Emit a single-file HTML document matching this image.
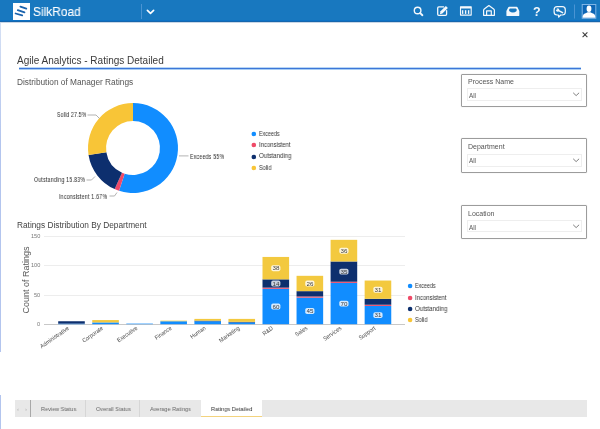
<!DOCTYPE html>
<html><head><meta charset="utf-8"><style>
html,body{margin:0;padding:0;width:600px;height:429px;overflow:hidden;background:#fff;}
body{position:relative;font-family:"Liberation Sans",sans-serif;}
.t{position:absolute;white-space:nowrap;line-height:1;font-family:"Liberation Sans",sans-serif;will-change:transform;}
</style></head><body>
<div style="position:absolute;left:0;top:0;width:600px;height:22px;background:#1878BF;"></div><div style="position:absolute;left:0;top:20px;width:600px;height:1px;background:#0d72c6;"></div><div style="position:absolute;left:0;top:21px;width:600px;height:1px;background:#1566ad;"></div><div style="position:absolute;left:0;top:22px;width:600px;height:1px;background:#c9d6e6;"></div><div style="position:absolute;left:12.6px;top:2.8px;width:17.1px;height:17px;background:#fff;"></div><svg style="position:absolute;left:0;top:0" width="40" height="22" viewBox="0 0 40 22">
<g stroke="#1a63ad" stroke-width="1.8" stroke-linecap="round">
<line x1="20.4" y1="6.6" x2="26.3" y2="8.6"/>
<line x1="17.8" y1="10.2" x2="24.5" y2="12.3"/>
<line x1="15.6" y1="13.5" x2="22.2" y2="15.4"/>
</g></svg><div class="t" style="left:33.40px;top:6.23px;font-size:12.6px;color:#fff;-webkit-text-stroke:0.1px #fff;transform:scaleX(0.945);transform-origin:0 0;">SilkRoad</div>
<div style="position:absolute;left:140.5px;top:4px;width:1px;height:14.7px;background:#4a94d3;"></div><svg style="position:absolute;left:145px;top:8px" width="11" height="8" viewBox="0 0 11 8">
<polyline points="2.4,2.4 5.5,5.3 8.6,2.4" fill="none" stroke="#fff" stroke-width="1.7" stroke-linecap="round" stroke-linejoin="round"/></svg><svg style="position:absolute;left:400px;top:0" width="200" height="22" viewBox="400 0 200 22">
<g fill="none" stroke="#f4f8fc" stroke-width="1.4" stroke-linecap="round" stroke-linejoin="round">
<circle cx="417.6" cy="10.5" r="3.3"/>
<line x1="420.2" y1="13.1" x2="422.4" y2="15.2" stroke-width="1.9"/>
<path d="M443.6 6.9 H438.8 Q437.7 6.9 437.7 8 V14.3 Q437.7 15.4 438.8 15.4 H445.5 Q446.6 15.4 446.6 14.3 V10.6" stroke-width="1.3"/>
<rect x="460.5" y="6.8" width="10.7" height="8.3" stroke-width="1.1"/>
<path d="M483.6 15.3 V10.2 Q483.8 9.5 484.6 8.8 L488.9 5.6 L493.3 8.8 Q494.2 9.5 494.4 10.2 V15.3 Z" stroke-width="1.2"/>
<path d="M486.6 15.3 V10.9 H491.3 V15.3" stroke-width="1.2"/>
<path d="M557.1 6.7 H562.3 Q565.3 6.7 565.3 9.7 V12 Q565.3 15 562.3 15 H560.6 L558.7 17.2 L558.4 15 H557.1 Q554.1 15 554.1 12 V9.7 Q554.1 6.7 557.1 6.7 Z" stroke-width="1.2"/>
</g>
<g fill="#f4f8fc">
<path d="M445.9 5.9 L447.9 7.9 L442.4 13.4 L439.9 14.2 L440.5 11.3 Z"/>
<rect x="460.5" y="6.8" width="10.7" height="1.7"/>
<rect x="461.9" y="10.2" width="1.4" height="3.7"/>
<rect x="464.9" y="10.2" width="1.4" height="3.7"/>
<rect x="467.9" y="10.2" width="1.4" height="3.7"/>
<path d="M509.2 6.7 H516.6 Q517.2 6.7 517.5 7.3 L519.3 11 V15.5 Q519.3 15.9 518.9 15.9 H506.8 Q506.4 15.9 506.4 15.5 V11 L508.3 7.3 Q508.6 6.7 509.2 6.7 Z"/>
</g>
<path d="M510.2 8.5 H515.6 Q516.3 8.5 516.5 9.2 L516.7 11.1 Q514.8 12.6 512.9 12.6 Q511 12.6 509.1 11.1 L509.3 9.2 Q509.5 8.5 510.2 8.5 Z" fill="#1878BF"/>
<path d="M557.8 10.2 L562.6 12.6" stroke="#f4f8fc" stroke-width="1.5" stroke-linecap="round"/>
<circle cx="557.6" cy="10" r="1.7" fill="#f4f8fc"/>
<circle cx="556.6" cy="8.9" r="0.75" fill="#1878BF"/>
<rect x="574" y="4.5" width="1" height="14" fill="#4a94d3"/>
<rect x="582.2" y="4.5" width="13.6" height="13.8" fill="#0e66b5" stroke="#7fb5e6" stroke-width="1"/>
<ellipse cx="589" cy="8.7" rx="2.4" ry="3.2" fill="#fff"/>
<path d="M582.7 17.8 V16 Q583.2 13.6 586.2 13 L587.6 12.2 H590.4 L591.8 13 Q594.8 13.6 595.3 16 V17.8 Z" fill="#fff"/>
</svg><div class="t" style="left:532.70px;top:5.82px;font-size:12.5px;color:#f4f8fc;font-weight:bold;">?</div>
<div style="position:absolute;left:0;top:23px;width:1px;height:329px;background:linear-gradient(#d5e0f4,#b3c5ee 120px);"></div><div style="position:absolute;left:0;top:395px;width:1px;height:34px;background:#b3c5ee;"></div><svg style="position:absolute;left:580px;top:30px" width="10" height="10" viewBox="0 0 10 10">
<g stroke="#3a3a3a" stroke-width="1.05"><line x1="2.6" y1="2.3" x2="7.4" y2="7.1"/><line x1="7.4" y1="2.3" x2="2.6" y2="7.1"/></g></svg><div class="t" style="left:17.20px;top:55.73px;font-size:10px;color:#3a3a3a;">Agile Analytics - Ratings Detailed</div>
<div style="position:absolute;left:18.6px;top:67px;width:562.7px;height:1px;background:#b9d7f5;"></div><div style="position:absolute;left:18.6px;top:68px;width:562.7px;height:1px;background:#3c76d8;"></div><div style="position:absolute;left:18.6px;top:69px;width:562.7px;height:1px;background:#a9cdf3;"></div><div class="t" style="left:17.40px;top:78.17px;font-size:8.3px;color:#555;">Distribution of Manager Ratings</div>
<svg style="position:absolute;left:0;top:0" width="600" height="429" viewBox="0 0 600 429"><path d="M133.00 103.00 A45 45 0 1 1 119.09 190.80 L124.66 173.68 A27 27 0 1 0 133.00 121.00 Z" fill="#118DFF"/><path d="M119.09 190.80 A45 45 0 0 1 114.69 189.11 L122.01 172.66 A27 27 0 0 0 124.66 173.68 Z" fill="#EF4A68"/><path d="M114.69 189.11 A45 45 0 0 1 88.55 155.04 L106.33 152.22 A27 27 0 0 0 122.01 172.66 Z" fill="#0D2F6E"/><path d="M88.55 155.04 A45 45 0 0 1 133.00 103.00 L133.00 121.00 A27 27 0 0 0 106.33 152.22 Z" fill="#F8C537"/><g fill="none" stroke="#999" stroke-width="0.75">
<polyline points="87.5,115 96,115 99.5,118.5"/>
<polyline points="179,155.9 188.5,155.9"/>
<polyline points="86.5,180 91.5,180 95,176.5"/>
<polyline points="109.5,196 114.5,196 117,192.5"/>
</g></svg><div class="t" style="left:57.00px;top:112.38px;font-size:6.4px;color:#333;letter-spacing:0.3px;-webkit-text-stroke:0.04px #333;transform:scaleX(0.7875739518592086);transform-origin:0 0;">Solid 27.5%</div>
<div class="t" style="left:190.40px;top:154.38px;font-size:6.4px;color:#333;letter-spacing:0.3px;-webkit-text-stroke:0.04px #333;transform:scaleX(0.8106324818550287);transform-origin:0 0;">Exceeds 55%</div>
<div class="t" style="left:33.70px;top:177.38px;font-size:6.4px;color:#333;letter-spacing:0.3px;-webkit-text-stroke:0.04px #333;transform:scaleX(0.8091891073366478);transform-origin:0 0;">Outstanding 15.83%</div>
<div class="t" style="left:59.20px;top:193.58px;font-size:6.4px;color:#333;letter-spacing:0.3px;-webkit-text-stroke:0.04px #333;transform:scaleX(0.8120376597175522);transform-origin:0 0;">Inconsistent 1.67%</div>
<svg style="position:absolute;left:249px;top:128.80px" width="10" height="10"><circle cx="4.8" cy="5" r="2.3" fill="#118DFF"/></svg><div class="t" style="left:259.20px;top:130.57px;font-size:6.3px;color:#333;transform:scaleX(0.85);transform-origin:0 0;">Exceeds</div>
<svg style="position:absolute;left:249px;top:140.15px" width="10" height="10"><circle cx="4.8" cy="5" r="2.3" fill="#EF4A68"/></svg><div class="t" style="left:259.20px;top:141.92px;font-size:6.3px;color:#333;transform:scaleX(0.94);transform-origin:0 0;">Inconsistent</div>
<svg style="position:absolute;left:249px;top:151.50px" width="10" height="10"><circle cx="4.8" cy="5" r="2.3" fill="#0D2F6E"/></svg><div class="t" style="left:259.20px;top:153.27px;font-size:6.3px;color:#333;transform:scaleX(0.95);transform-origin:0 0;">Outstanding</div>
<svg style="position:absolute;left:249px;top:162.85px" width="10" height="10"><circle cx="4.8" cy="5" r="2.3" fill="#F8C537"/></svg><div class="t" style="left:259.20px;top:164.62px;font-size:6.3px;color:#333;transform:scaleX(0.886);transform-origin:0 0;">Solid</div>
<div style="position:absolute;left:461.2px;top:73.50px;width:123.60px;height:31.50px;border:1px solid #9c9c9c;border-radius:1px;box-shadow:0 0 1px #c8c8c8;"></div><div style="position:absolute;left:466.7px;top:88.10px;width:113.60px;height:11.10px;border:0.5px solid #eeeeee;"></div><div class="t" style="left:468.00px;top:78.47px;font-size:7.0px;color:#555;">Process Name</div>
<div class="t" style="left:469.00px;top:93.07px;font-size:6.3px;color:#555;">All</div>
<svg style="position:absolute;left:570px;top:89.25px" width="12" height="10" viewBox="0 0 12 10">
<polyline points="3.2,3.8 6.15,6.6 9.1,3.8" fill="none" stroke="#707070" stroke-width="0.9"/></svg><div style="position:absolute;left:461.2px;top:138.10px;width:123.60px;height:32.90px;border:1px solid #9c9c9c;border-radius:1px;box-shadow:0 0 1px #c8c8c8;"></div><div style="position:absolute;left:466.7px;top:154.00px;width:113.60px;height:11.40px;border:0.5px solid #eeeeee;"></div><div class="t" style="left:468.00px;top:142.97px;font-size:7.0px;color:#555;">Department</div>
<div class="t" style="left:469.00px;top:157.77px;font-size:6.3px;color:#555;">All</div>
<svg style="position:absolute;left:570px;top:155.30px" width="12" height="10" viewBox="0 0 12 10">
<polyline points="3.2,3.8 6.15,6.6 9.1,3.8" fill="none" stroke="#707070" stroke-width="0.9"/></svg><div style="position:absolute;left:461.2px;top:204.70px;width:123.60px;height:32.50px;border:1px solid #9c9c9c;border-radius:1px;box-shadow:0 0 1px #c8c8c8;"></div><div style="position:absolute;left:466.7px;top:219.80px;width:113.60px;height:10.30px;border:0.5px solid #eeeeee;"></div><div class="t" style="left:468.00px;top:209.97px;font-size:7.0px;color:#555;">Location</div>
<div class="t" style="left:469.00px;top:224.57px;font-size:6.3px;color:#555;">All</div>
<svg style="position:absolute;left:570px;top:220.55px" width="12" height="10" viewBox="0 0 12 10">
<polyline points="3.2,3.8 6.15,6.6 9.1,3.8" fill="none" stroke="#707070" stroke-width="0.9"/></svg><div class="t" style="left:17.00px;top:221.47px;font-size:8.3px;color:#444;">Ratings Distribution By Department</div>
<div class="t" style="left:26px;top:279.7px;font-size:9px;color:#5a5a5a;transform:translate(-50%,-50%) rotate(-90deg);line-height:1;will-change:auto;">Count of Ratings</div><div class="t" style="right:559.80px;top:322.30px;font-size:5.6px;color:#777;line-height:5.6px;">0</div><div class="t" style="right:559.80px;top:292.80px;font-size:5.6px;color:#777;line-height:5.6px;">50</div><div style="position:absolute;left:43.7px;top:294.80px;width:361px;height:0.8px;background:#ededed;"></div><div class="t" style="right:559.80px;top:263.30px;font-size:5.6px;color:#777;line-height:5.6px;">100</div><div style="position:absolute;left:43.7px;top:265.30px;width:361px;height:0.8px;background:#ededed;"></div><div class="t" style="right:559.80px;top:233.80px;font-size:5.6px;color:#777;line-height:5.6px;">150</div><div style="position:absolute;left:43.7px;top:235.80px;width:361px;height:0.8px;background:#ededed;"></div><div style="position:absolute;left:43.7px;top:323.70px;width:361px;height:1px;background:#c8c8c8;"></div><div class="t" style="right:533.20px;top:325px;font-size:6px;color:#4a4a4a;line-height:1;transform-origin:100% 0;transform:rotate(-35deg) scaleX(0.9);will-change:auto;">Administrative</div><div class="t" style="right:499.15px;top:325px;font-size:6px;color:#4a4a4a;line-height:1;transform-origin:100% 0;transform:rotate(-35deg) scaleX(0.9);will-change:auto;">Corporate</div><div class="t" style="right:465.10px;top:325px;font-size:6px;color:#4a4a4a;line-height:1;transform-origin:100% 0;transform:rotate(-35deg) scaleX(0.9);will-change:auto;">Executive</div><div class="t" style="right:431.05px;top:325px;font-size:6px;color:#4a4a4a;line-height:1;transform-origin:100% 0;transform:rotate(-35deg) scaleX(0.9);will-change:auto;">Finance</div><div class="t" style="right:397.00px;top:325px;font-size:6px;color:#4a4a4a;line-height:1;transform-origin:100% 0;transform:rotate(-35deg) scaleX(0.9);will-change:auto;">Human</div><div class="t" style="right:362.95px;top:325px;font-size:6px;color:#4a4a4a;line-height:1;transform-origin:100% 0;transform:rotate(-35deg) scaleX(0.9);will-change:auto;">Marketing</div><div class="t" style="right:328.90px;top:325px;font-size:6px;color:#4a4a4a;line-height:1;transform-origin:100% 0;transform:rotate(-35deg) scaleX(0.9);will-change:auto;">R&amp;D</div><div class="t" style="right:294.85px;top:325px;font-size:6px;color:#4a4a4a;line-height:1;transform-origin:100% 0;transform:rotate(-35deg) scaleX(0.9);will-change:auto;">Sales</div><div class="t" style="right:260.80px;top:325px;font-size:6px;color:#4a4a4a;line-height:1;transform-origin:100% 0;transform:rotate(-35deg) scaleX(0.9);will-change:auto;">Services</div><div class="t" style="right:226.75px;top:325px;font-size:6px;color:#4a4a4a;line-height:1;transform-origin:100% 0;transform:rotate(-35deg) scaleX(0.9);will-change:auto;">Support</div><svg style="position:absolute;left:0;top:0" width="600" height="429" viewBox="0 0 600 429"><rect x="58.20" y="323.61" width="26.6" height="0.59" fill="#118DFF"/><rect x="58.20" y="321.25" width="26.6" height="2.36" fill="#0D2F6E"/><rect x="92.25" y="322.43" width="26.6" height="1.77" fill="#118DFF"/><rect x="92.25" y="320.07" width="26.6" height="2.36" fill="#F3C93F"/><rect x="126.30" y="323.61" width="26.6" height="0.59" fill="#118DFF"/><rect x="160.35" y="321.25" width="26.6" height="2.95" fill="#118DFF"/><rect x="160.35" y="320.66" width="26.6" height="0.59" fill="#F3C93F"/><rect x="194.40" y="321.25" width="26.6" height="2.95" fill="#118DFF"/><rect x="194.40" y="320.66" width="26.6" height="0.59" fill="#0D2F6E"/><rect x="194.40" y="318.89" width="26.6" height="1.77" fill="#F3C93F"/><rect x="228.45" y="322.43" width="26.6" height="1.77" fill="#118DFF"/><rect x="228.45" y="321.84" width="26.6" height="0.59" fill="#0D2F6E"/><rect x="228.45" y="318.89" width="26.6" height="2.95" fill="#F3C93F"/><rect x="262.50" y="288.80" width="26.6" height="35.40" fill="#118DFF"/><rect x="262.50" y="287.62" width="26.6" height="1.18" fill="#EF4A68"/><rect x="262.50" y="279.36" width="26.6" height="8.26" fill="#0D2F6E"/><rect x="262.50" y="256.94" width="26.6" height="22.42" fill="#F3C93F"/><rect x="296.55" y="297.65" width="26.6" height="26.55" fill="#118DFF"/><rect x="296.55" y="296.47" width="26.6" height="1.18" fill="#EF4A68"/><rect x="296.55" y="291.16" width="26.6" height="5.31" fill="#0D2F6E"/><rect x="296.55" y="275.82" width="26.6" height="15.34" fill="#F3C93F"/><rect x="330.60" y="282.90" width="26.6" height="41.30" fill="#118DFF"/><rect x="330.60" y="281.72" width="26.6" height="1.18" fill="#EF4A68"/><rect x="330.60" y="261.48" width="26.6" height="20.24" fill="#0D2F6E"/><rect x="330.60" y="239.83" width="26.6" height="21.65" fill="#F3C93F"/><rect x="364.65" y="305.91" width="26.6" height="18.29" fill="#118DFF"/><rect x="364.65" y="304.73" width="26.6" height="1.18" fill="#EF4A68"/><rect x="364.65" y="298.83" width="26.6" height="5.90" fill="#0D2F6E"/><rect x="364.65" y="280.54" width="26.6" height="18.29" fill="#F3C93F"/><rect x="271.20" y="303.60" width="9.2" height="5.9" rx="1.8" fill="rgba(255,255,255,0.82)"/><rect x="271.20" y="280.59" width="9.2" height="5.9" rx="1.8" fill="rgba(255,255,255,0.78)"/><rect x="271.20" y="265.25" width="9.2" height="5.9" rx="1.8" fill="rgba(255,255,255,0.82)"/><rect x="305.25" y="308.03" width="9.2" height="5.9" rx="1.8" fill="rgba(255,255,255,0.82)"/><rect x="305.25" y="280.59" width="9.2" height="5.9" rx="1.8" fill="rgba(255,255,255,0.82)"/><rect x="339.30" y="300.65" width="9.2" height="5.9" rx="1.8" fill="rgba(255,255,255,0.82)"/><rect x="339.30" y="268.70" width="9.2" height="5.9" rx="1.8" fill="rgba(255,255,255,0.78)"/><rect x="339.30" y="247.76" width="9.2" height="5.9" rx="1.8" fill="rgba(255,255,255,0.82)"/><rect x="373.35" y="312.16" width="9.2" height="5.9" rx="1.8" fill="rgba(255,255,255,0.82)"/><rect x="373.35" y="286.79" width="9.2" height="5.9" rx="1.8" fill="rgba(255,255,255,0.82)"/></svg><div class="t" style="left:275.80px;top:306.70px;font-size:6.2px;color:#3a3a3a;line-height:1;transform:translate(-50%,-50%);">60</div><div class="t" style="left:275.80px;top:283.69px;font-size:6.2px;color:#3a3a3a;line-height:1;transform:translate(-50%,-50%);">14</div><div class="t" style="left:275.80px;top:268.35px;font-size:6.2px;color:#3a3a3a;line-height:1;transform:translate(-50%,-50%);">38</div><div class="t" style="left:309.85px;top:311.12px;font-size:6.2px;color:#3a3a3a;line-height:1;transform:translate(-50%,-50%);">45</div><div class="t" style="left:309.85px;top:283.69px;font-size:6.2px;color:#3a3a3a;line-height:1;transform:translate(-50%,-50%);">26</div><div class="t" style="left:343.90px;top:303.75px;font-size:6.2px;color:#3a3a3a;line-height:1;transform:translate(-50%,-50%);">70</div><div class="t" style="left:343.90px;top:271.80px;font-size:6.2px;color:#3a3a3a;line-height:1;transform:translate(-50%,-50%);">35</div><div class="t" style="left:343.90px;top:250.86px;font-size:6.2px;color:#3a3a3a;line-height:1;transform:translate(-50%,-50%);">36</div><div class="t" style="left:377.95px;top:315.25px;font-size:6.2px;color:#3a3a3a;line-height:1;transform:translate(-50%,-50%);">31</div><div class="t" style="left:377.95px;top:289.88px;font-size:6.2px;color:#3a3a3a;line-height:1;transform:translate(-50%,-50%);">31</div><svg style="position:absolute;left:405px;top:281.30px" width="10" height="10"><circle cx="5.1" cy="5" r="2.3" fill="#118DFF"/></svg><div class="t" style="left:415.30px;top:283.27px;font-size:6.3px;color:#333;transform:scaleX(0.85);transform-origin:0 0;">Exceeds</div>
<svg style="position:absolute;left:405px;top:292.57px" width="10" height="10"><circle cx="5.1" cy="5" r="2.3" fill="#EF4A68"/></svg><div class="t" style="left:415.30px;top:294.54px;font-size:6.3px;color:#333;transform:scaleX(0.94);transform-origin:0 0;">Inconsistent</div>
<svg style="position:absolute;left:405px;top:303.84px" width="10" height="10"><circle cx="5.1" cy="5" r="2.3" fill="#0D2F6E"/></svg><div class="t" style="left:415.30px;top:305.81px;font-size:6.3px;color:#333;transform:scaleX(0.95);transform-origin:0 0;">Outstanding</div>
<svg style="position:absolute;left:405px;top:315.11px" width="10" height="10"><circle cx="5.1" cy="5" r="2.3" fill="#F8C537"/></svg><div class="t" style="left:415.30px;top:317.08px;font-size:6.3px;color:#333;transform:scaleX(0.886);transform-origin:0 0;">Solid</div>
<div style="position:absolute;left:15px;top:400.3px;width:572px;height:16.5px;background:#e8e8e8;"></div><div style="position:absolute;left:200.6px;top:400.3px;width:61.4px;height:16.5px;background:#fff;"></div><div style="position:absolute;left:200.6px;top:415.8px;width:61.4px;height:1px;background:#f3d37e;"></div><div style="position:absolute;left:30px;top:400.3px;width:1px;height:16.5px;background:#a8a8a8;"></div><div style="position:absolute;left:84.90px;top:400.3px;width:0.8px;height:16.5px;background:#d6d6d6;"></div><div style="position:absolute;left:139.30px;top:400.3px;width:0.8px;height:16.5px;background:#d6d6d6;"></div><div class="t" style="left:17.30px;top:405.92px;font-size:6px;color:#b0b0b0;">‹</div>
<div class="t" style="left:24.80px;top:405.92px;font-size:6px;color:#b0b0b0;">›</div>
<div class="t" style="left:41.30px;top:406.45px;font-size:6.2px;color:#666;transform:scaleX(0.89);transform-origin:0 0;">Review Status</div>
<div class="t" style="left:95.80px;top:406.45px;font-size:6.2px;color:#666;transform:scaleX(0.9);transform-origin:0 0;">Overall Status</div>
<div class="t" style="left:150.00px;top:406.45px;font-size:6.2px;color:#666;transform:scaleX(0.897);transform-origin:0 0;">Average Ratings</div>
<div class="t" style="left:211.00px;top:406.45px;font-size:6.2px;color:#333;transform:scaleX(0.91);transform-origin:0 0;">Ratings Detailed</div>

</body></html>
